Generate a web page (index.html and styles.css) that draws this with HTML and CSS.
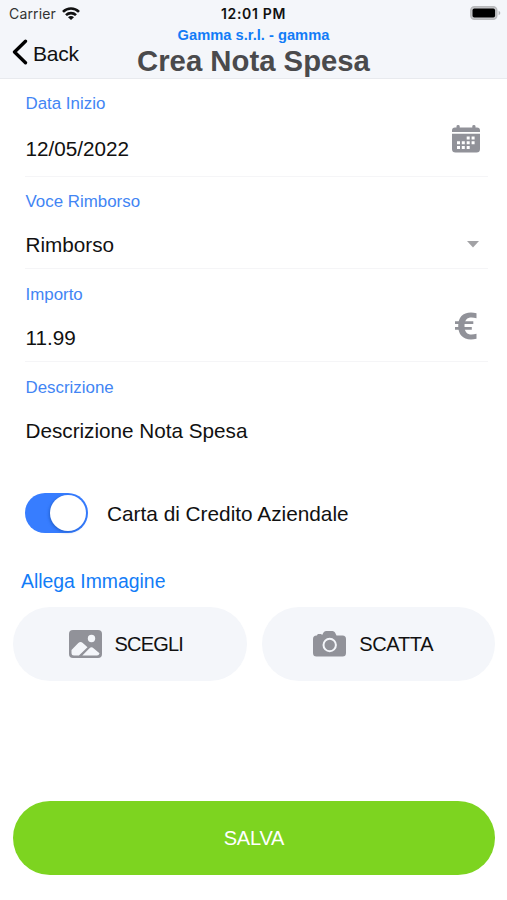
FILE: index.html
```html
<!DOCTYPE html>
<html lang="it">
<head>
<meta charset="utf-8">
<meta name="viewport" content="width=device-width">
<title>Crea Nota Spesa</title>
<link rel="stylesheet" href="styles.css">
</head>
<body>
<header class="header">
  <div class="status">
    <div class="status-left">
      <span class="carrier">Carrier</span>
      <svg class="wifi" viewBox="0 0 18 13" width="18" height="13" fill="none" stroke="#111" stroke-width="2.6">
        <path d="M1 4.8C5.5.3 12.5.3 17 4.8M4 8.200c2.800-2.800 7.200-2.800 10 0"/>
        <path d="M9 13 6 10.200c1.700-1.600 4.300-1.600 6 0Z" fill="#111" stroke="none"/>
      </svg>
    </div>
    <span class="clock">12:01 PM</span>
    <svg class="battery" viewBox="0 0 31 14" width="31" height="14">
      <rect x=".8" y=".8" width="26" height="12.400" rx="3.600" fill="#c8c9cc" stroke="#b8b9bc" stroke-width="1.5"/>
      <rect x="2.500" y="2.600" width="22.600" height="9" rx="1.800" fill="#000"/>
      <path d="M28.600 4.800c2.200.8 2.200 3.700 0 4.500Z" fill="#b2b3b6"/>
    </svg>
  </div>
  <div class="nav">
    <div class="back">
      <svg viewBox="0 0 16 26" width="16" height="26" fill="none" stroke="#000" stroke-width="3.300" stroke-linecap="round" stroke-linejoin="round"><path d="M13.500 2.200 2.500 13l11 10.800"/></svg>
      <span>Back</span>
    </div>
    <div class="titles">
      <div class="company">Gamma s.r.l. - gamma</div>
      <h1 class="title">Crea Nota Spesa</h1>
    </div>
  </div>
</header>
<main class="form">
  <section class="field field-date">
    <div class="label">Data Inizio</div>
    <div class="value">12/05/2022</div>
    <svg class="icon" viewBox="0 0 28 28" width="28" height="28" fill="#919299">
      <path d="M0 7V5.500Q0 2.500 3 2.500h1.500V1.300q0-1.300 1.600-1.300t1.600 1.300v1.200h12.600V1.300Q20.300 0 21.900 0t1.600 1.300v1.200H25q3 0 3 3V7Z"/>
      <path d="M0 8.700h28v15.300q0 3.500-3.500 3.500h-21Q0 27.500 0 24Z"/>
      <path fill="#fff" d="M14.700 11.500h3v3h-3zM19.600 11.500h3v3h-3zM5 16.300h3v3H5zM9.800 16.300h3v3h-3zM14.700 16.300h3v3h-3zM19.600 16.300h3v3h-3zM5 21.100h3v3H5zM9.800 21.100h3v3h-3zM14.700 21.100h3v3h-3z"/>
    </svg>
  </section>
  <section class="field field-item">
    <div class="label">Voce Rimborso</div>
    <div class="value">Rimborso</div>
    <svg class="icon" viewBox="0 0 12 7" width="12" height="7" fill="#a2a2a5"><path d="M0 0h12L6 6.500Z"/></svg>
  </section>
  <section class="field field-amount">
    <div class="label">Importo</div>
    <div class="value">11.99</div>
    <svg class="icon" viewBox="0 0 22 28" width="22" height="28" fill="#919299">
      <path d="M21.500 1.200v5C14 4.300 9.500 6 9.500 14s4.500 9.700 12 7.800v5C9.500 29.300 3.200 24 3.200 14S9.500-1.300 21.500 1.200Z"/>
      <path d="M0 9.200h18.300v2.800H0zM0 14.900h16.800v2.800H0z"/>
    </svg>
  </section>
  <section class="field field-description">
    <div class="label">Descrizione</div>
    <div class="value">Descrizione Nota Spesa</div>
  </section>
  <div class="switch-row">
    <span class="switch"><span class="knob"></span></span>
    <span class="switch-text">Carta di Credito Aziendale</span>
  </div>
  <h2 class="attach-title">Allega Immagine</h2>
  <div class="attach">
    <button class="pill" type="button">
      <svg viewBox="0 0 33 28" width="33" height="28">
        <rect width="33" height="28" rx="4" fill="#919299"/>
        <circle cx="22.500" cy="8.500" r="3.700" fill="#f4f6fa"/>
        <path d="M2.500 20 9.300 13q2.300-2.200 4.500 0l4.700 4.200-8.600 8.300H5q-2.500 0-2.500-2.500Z" fill="#f4f6fa"/>
        <path d="m13.300 25.500 7.200-7.200q2-1.900 4 0l6 5q-.5 2.200-2.500 2.200Z" fill="#f4f6fa"/>
      </svg>
      <span class="choose">SCEGLI</span>
    </button>
    <button class="pill pill-shoot" type="button">
      <svg viewBox="0 0 33 26" width="33" height="26">
        <path d="M0 8q0-3.500 3.500-3.500H4q0-1.500 1.400-1.500h2.200Q9 3 9 4.200l1.500-2.700Q11.300 0 13 0h6.500q1.700 0 2.500 1.500l1.500 3H29.500Q33 4.500 33 8v14q0 3.500-3.500 3.500h-26Q0 25.500 0 22Z" fill="#919299"/>
        <circle cx="16.700" cy="14" r="6.200" fill="none" stroke="#f4f6fa" stroke-width="2"/>
      </svg>
      <span class="shoot">SCATTA</span>
    </button>
  </div>
  <button class="save" type="button">SALVA</button>
</main>
</body>
</html>
```
FILE: styles.css
```css
* { box-sizing: border-box; }

body {
  margin: 0;
  width: 507px;
  height: 900px;
  overflow: hidden;
  background: #fff;
  color: #111;
  font-family: "Liberation Sans", Arial, sans-serif;
}

.header {
  height: 79px;
  background: #f4f6fa;
  border-bottom: 1px solid #e8eaee;
}

.status {
  display: grid;
  grid-template-columns: 1fr auto 1fr;
  align-items: center;
  height: 27px;
  padding: 0 6px 0 9px;
  font-family: Inter, sans-serif;
  font-size: 14px;
}

.status-left { display: flex; align-items: center; gap: 6px; }
.carrier { color: #333; letter-spacing: .15px; }
.clock { margin-right: 3px; font-weight: 600; letter-spacing: .65px; }
.battery { justify-self: end; margin-top: -1px; }

.nav {
  display: grid;
  grid-template-columns: 1fr auto 1fr;
  height: 51px;
}

.back {
  display: flex;
  align-items: center;
  gap: 5px;
  height: 50px;
  padding-left: 12px;
  font-size: 21px;
}

.back span { padding-top: 3px; letter-spacing: -.2px; }
.titles { text-align: center; white-space: nowrap; }
.company { color: #127cf7; font-size: 14.7px; font-weight: 700; line-height: 17px; }
.title { margin: 0; color: #4a4a4c; font-size: 29.3px; font-weight: 700; line-height: 33px; }

.field {
  display: grid;
  grid-template-columns: 1fr auto;
  grid-template-rows: 20px 24px;
  margin: 0 19px 0 25px;
  border-bottom: 1px solid #f5f5f7;
}

.label { padding-left: .5px; color: #4285f4; font-size: 16.9px; line-height: 20px; }
.value { grid-row: 2; padding-left: .5px; font-size: 20.7px; line-height: 24px; white-space: nowrap; }
.icon { grid-column: 2; grid-row: 1 / 3; align-self: center; }
.field-date { height: 98px; padding-top: 15px; row-gap: 23px; }
.field-date .icon { margin: 22px 8px 0 0; }
.field-item { height: 92px; padding-top: 15px; row-gap: 21px; }
.field-item .icon { margin: 39px 9px 0 0; }
.field-amount { height: 93px; padding-top: 16px; row-gap: 21px; }
.field-amount .icon { margin: 16px 11px 0 0; }
.field-description { height: 131px; padding-top: 16px; row-gap: 21px; border: 0; }

.switch-row { display: flex; align-items: center; gap: 19px; height: 40px; padding-left: 25px; }
.switch { display: flex; justify-content: flex-end; width: 63px; height: 40px; padding: 2px; border-radius: 20px; background: #377dff; }
.knob { width: 36px; height: 36px; border-radius: 50%; background: #fff; box-shadow: -1px 1px 3px #164eae99; }
.switch-text { padding-top: 1px; font-size: 20.8px; }

.attach-title { margin: 36px 0 0 21px; color: #127cf7; font-size: 19.4px; font-weight: 400; line-height: 24px; }
.attach { display: grid; grid-template-columns: 1fr 1fr; gap: 15px; height: 74px; margin: 14px 12px 0 13px; }
.pill { display: flex; align-items: center; justify-content: center; gap: 12px; padding: 0 7px 0 0; border: 0; border-radius: 37px; background: #f4f6fa; color: #111; font: 20px "Liberation Sans", Arial, sans-serif; }
.pill-shoot { gap: 13px; padding-right: 10px; }
.choose { letter-spacing: -.8px; }
.shoot { letter-spacing: -.3px; }
.save { display: block; width: 482px; height: 74px; margin: 120px 12px 0 13px; padding: 0; border: 0; border-radius: 37px; background: #7dd420; color: #fff; font: 20px "Liberation Sans", Arial, sans-serif; letter-spacing: -.2px; }
```
